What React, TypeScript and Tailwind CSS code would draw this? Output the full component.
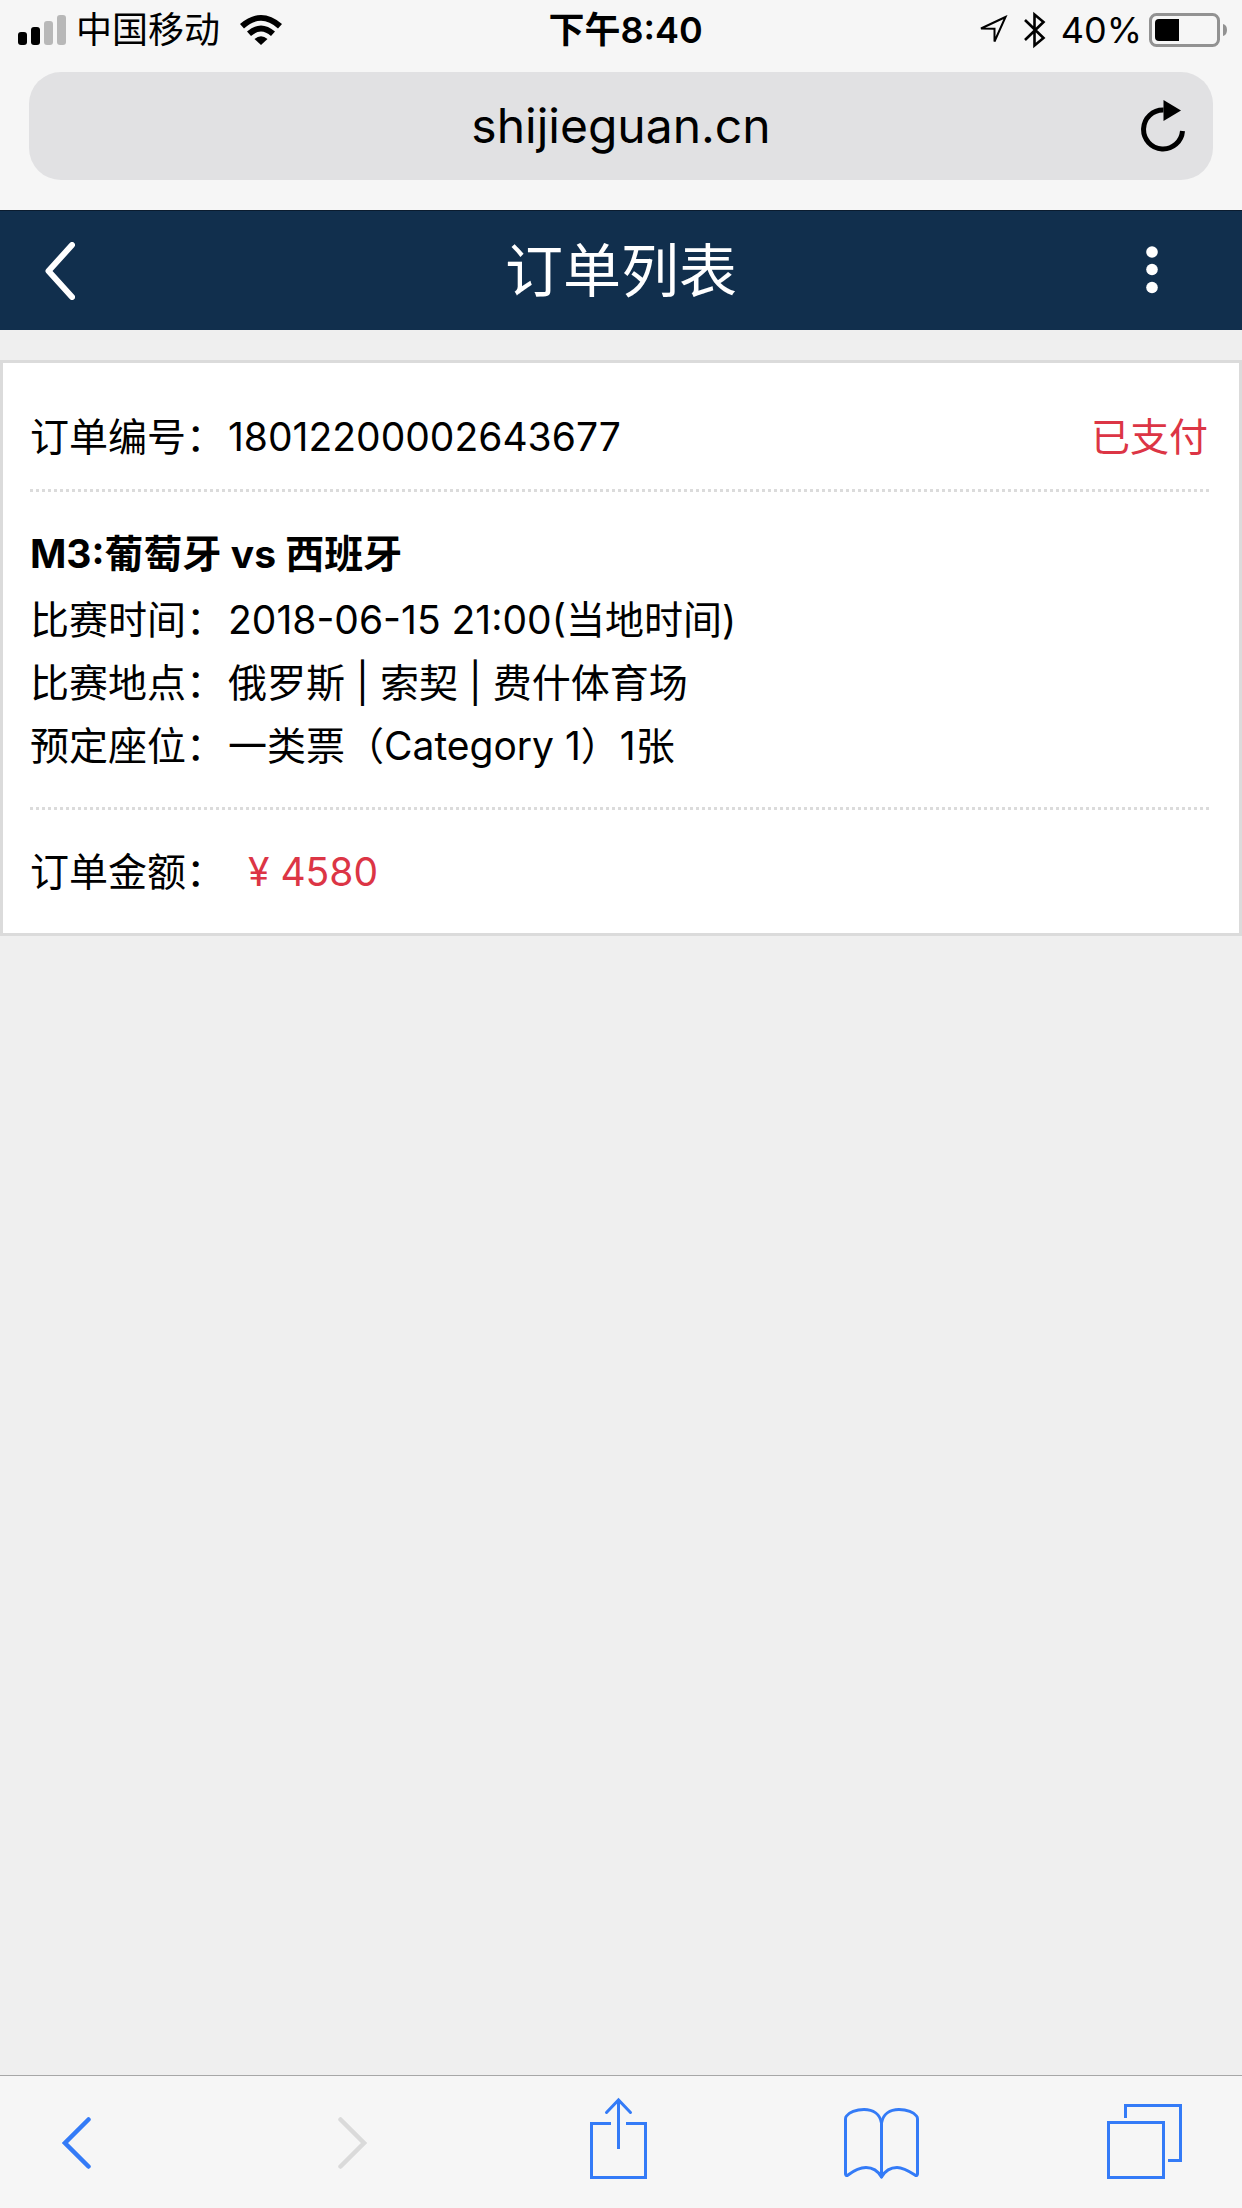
import React from 'react';

interface Order {
  id: string;
  status: string;
  match: string;
  time: string;
  place: string;
  seat: string;
  amount: string;
}

const orders: Order[] = [
  {
    id: '18012200002643677',
    status: '已支付',
    match: 'M3:葡萄牙 vs 西班牙',
    time: '2018-06-15 21:00(当地时间)',
    place: '俄罗斯 | 索契 | 费什体育场',
    seat: '一类票（Category 1）1张',
    amount: '¥ 4580',
  },
];

const StatusBar: React.FC = () => (
  <div className="flex h-[60px] items-center pl-[18px] pr-[9px] text-[36px] leading-[60px]">
    <div className="flex flex-1 items-center">
      <svg width="48" height="30" viewBox="0 0 48 30" aria-hidden="true">
        <rect x="0" y="17" width="9" height="13" rx="3" />
        <rect x="13" y="12" width="9" height="18" rx="3" />
        <rect x="26" y="6" width="9" height="24" rx="3" fill="#b8b8b8" />
        <rect x="39" y="0" width="9" height="30" rx="3" fill="#b8b8b8" />
      </svg>
      <span className="ml-[10px]">中国移动</span>
      <svg className="ml-[20px]" width="42" height="30" viewBox="0 0 42 30" aria-hidden="true">
        <path d="M0 9 Q21 -9 42 9 L38 13.5 Q21 -2 4 13.5 Z" />
        <path d="M7 16.5 Q21 4.500 35 16.500 L31 21 Q21 12 11 21 Z" />
        <path d="M14.500 24 Q21 18.500 27.500 24 L21 30 Z" />
      </svg>
    </div>
    <span className="font-semibold">下午8:40</span>
    <div className="flex flex-1 items-center justify-end">
      <svg width="30" height="30" viewBox="0 0 30 30" fill="none" stroke="#000" strokeWidth="2" aria-hidden="true">
        <path d="M27.500 2 L3 13.500 L16.500 13.800 L16.500 26.500 Z" />
      </svg>
      <svg className="ml-[16px]" width="22" height="38" viewBox="0 0 22 38" fill="none" stroke="#000" strokeWidth="2.600" aria-hidden="true">
        <path d="M1 9 L19.500 27 L10.500 34.500 V3.500 L19.500 11 L1 29" />
      </svg>
      <span className="ml-[15px]">40%</span>
      <svg className="ml-[7px] mr-[6px]" width="78" height="34" viewBox="0 0 78 34" aria-hidden="true">
        <rect x="1.500" y="1.500" width="68" height="31" rx="6" fill="none" stroke="#929292" strokeWidth="3" />
        <path d="M10 6 H30 V28 H10 Q6 28 6 24 V10 Q6 6 10 6 Z" />
        <path d="M74 11 Q78 12 78 17 Q78 22 74 23 Z" fill="#929292" />
      </svg>
    </div>
  </div>
);

const AddressBar: React.FC = () => (
  <div className="mx-[29px] mt-3 mb-[30px] flex h-[108px] items-center rounded-[32px] bg-[#e1e1e3] pl-[100px]">
    <input
      type="text"
      aria-label="网址"
      defaultValue="shijieguan.cn"
      className="min-w-0 flex-1 bg-transparent text-center text-[48px] leading-[60px] outline-none"
    />
    <button type="button" aria-label="刷新" className="flex w-[100px] justify-center">
      <svg width="44" height="52" viewBox="0 0 44 52">
        <path d="M22.500 10 A19.500 19.500 0 1 0 41.500 31" fill="none" stroke="#000" strokeWidth="5" />
        <path d="M22.500 0 L40 10.500 L22.500 21 Z" />
      </svg>
    </button>
  </div>
);

const PageHeader: React.FC = () => (
  <nav className="flex h-[120px] items-center border-t border-[#0b1c2f] bg-[#112f4d] text-white">
    <div className="flex flex-1">
      <button type="button" aria-label="返回" className="pl-[45px]">
        <svg width="30" height="58" viewBox="0 0 30 58" fill="none" stroke="#fff" strokeWidth="6" strokeLinecap="round" strokeLinejoin="round">
          <path d="M27 3 L3.500 29 L27 55" />
        </svg>
      </button>
    </div>
    <h1 className="text-[58px] leading-[84px]">订单列表</h1>
    <div className="flex flex-1 justify-end">
      <button type="button" aria-label="更多" className="pr-[84px]">
        <svg width="12" height="50" viewBox="0 0 12 50" fill="#fff">
          <circle cx="6" cy="6" r="5.800" />
          <circle cx="6" cy="23.500" r="5.800" />
          <circle cx="6" cy="41.500" r="5.800" />
        </svg>
      </button>
    </div>
  </nav>
);

const Divider: React.FC = () => (
  <div className="h-[3px] bg-[repeating-linear-gradient(90deg,#dbdbdb_0px,#dbdbdb_3px,transparent_3px,transparent_6px)]" />
);

const Field: React.FC<{ label: string; children: React.ReactNode }> = ({ label, children }) => (
  <p className="flex">
    <span className="w-[198px] shrink-0">{label}：</span>
    {children}
  </p>
);

const OrderCard: React.FC<{ order: Order }> = ({ order }) => (
  <article className="border-[3px] border-[#dbdbdb] bg-white px-[27px] text-[39px] leading-[63px]">
    <div className="flex justify-between pt-[42px] pb-[21px]">
      <Field label="订单编号">{order.id}</Field>
      <span className="pr-1 text-[#dc3545]">{order.status}</span>
    </div>
    <Divider />
    <div className="py-[30px]">
      <h2 className="mb-[3px] font-bold">{order.match}</h2>
      <Field label="比赛时间">{order.time}</Field>
      <Field label="比赛地点">{order.place}</Field>
      <Field label="预定座位">{order.seat}</Field>
    </div>
    <Divider />
    <div className="py-[30px]">
      <Field label="订单金额">
        <span className="ml-[20px] text-[#dc3545]">{order.amount}</span>
      </Field>
    </div>
  </article>
);

const Toolbar: React.FC = () => (
  <footer className="flex h-[133px] items-center justify-between border-t border-[#a7a7a7] bg-[#f6f6f6] pt-[2px] pl-[62px] pr-[60px] text-[#347bf7]">
    <button type="button" aria-label="后退" className="pr-[34px]">
      <svg width="29" height="52" viewBox="0 0 29 52" fill="none" stroke="currentColor" strokeWidth="4.500" strokeLinecap="round">
        <path d="M26.500 2.500 L3 26 L26.500 49.500" />
      </svg>
    </button>
    <button type="button" aria-label="前进" disabled className="px-[34px] text-[#dadada]">
      <svg width="29" height="52" viewBox="0 0 29 52" fill="none" stroke="currentColor" strokeWidth="4.500" strokeLinecap="round">
        <path d="M2.500 2.500 L26 26 L2.500 49.500" />
      </svg>
    </button>
    <button type="button" aria-label="分享" className="px-[9px]">
      <svg width="57" height="94" viewBox="0 0 57 94" fill="none" stroke="currentColor" strokeWidth="3">
        <path d="M21 27.500 H1.500 V81.500 H55.500 V27.500 H36" />
        <path d="M28.500 53 V4" />
        <path d="M16.500 16.500 L28.500 4 L40.500 16.500" strokeLinecap="round" />
      </svg>
    </button>
    <button type="button" aria-label="书签" className="px-[9px]">
      <svg width="75" height="74" viewBox="0 0 75 74" fill="none" stroke="currentColor" strokeWidth="3" strokeLinejoin="round">
        <path d="M37.500 71 V17 C36 8 29 3.500 20 3.500 C12 3.500 5 6.500 2.500 10 Q1.500 11 1.500 13 V68 Q2 70.500 4 69 C10 64.500 16 61.500 22 61.500 C30 61.500 34 65 37.500 71 Z" />
        <path d="M37.500 71 V17 C39 8 46 3.500 55 3.500 C63 3.500 70 6.500 72.500 10 Q73.500 11 73.500 13 V68 Q73 70.500 71 69 C64 64.500 58 61.500 53 61.500 C45 61.500 41 65 37.500 71 Z" />
      </svg>
    </button>
    <button type="button" aria-label="标签页">
      <svg width="75" height="79" viewBox="0 0 75 79" fill="none" stroke="currentColor" strokeWidth="3">
        <rect x="1.500" y="18.500" width="55" height="55" />
        <path d="M18.500 14 V1.500 H73.500 V56.500 H61" />
      </svg>
    </button>
  </footer>
);

const App: React.FC = () => {
  return (
    <div className="flex min-h-screen flex-col bg-[#efefef] font-['Inter','Noto_Sans_CJK_SC',sans-serif] text-black">
      <header className="bg-[#f6f6f6]">
        <StatusBar />
        <AddressBar />
      </header>
      <PageHeader />
      <main className="flex-1 pt-[30px]">
        {orders.map((order) => (
          <OrderCard key={order.id} order={order} />
        ))}
      </main>
      <Toolbar />
    </div>
  );
};

export default App;
